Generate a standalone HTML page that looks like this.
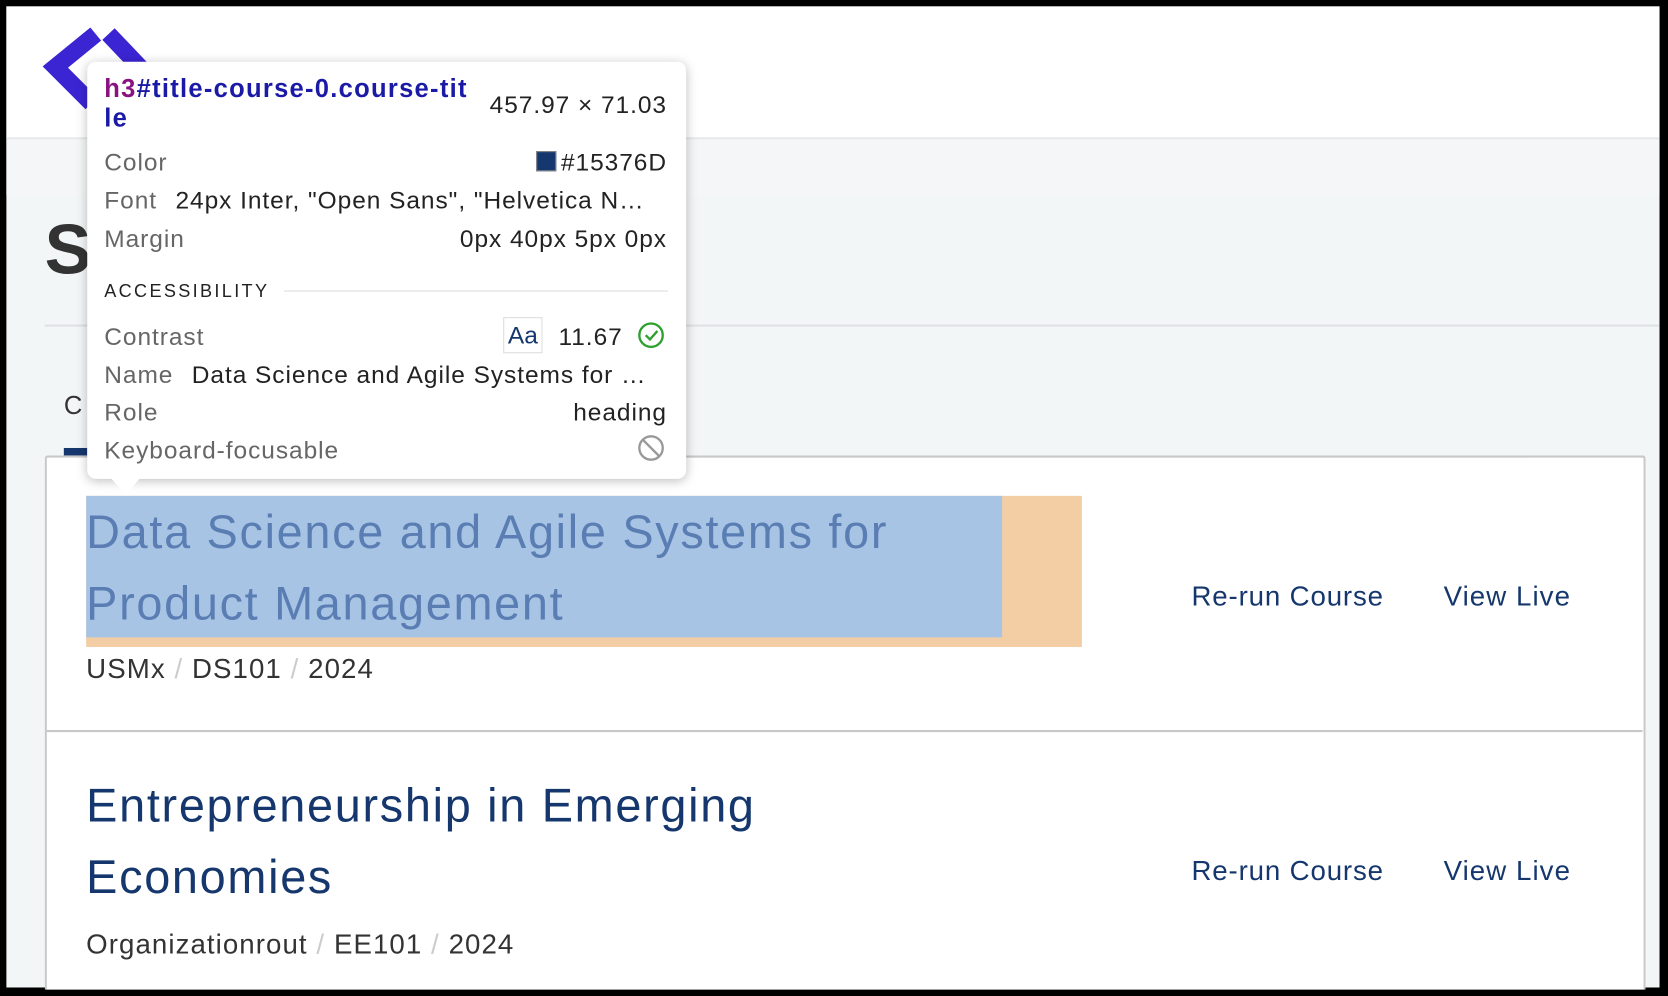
<!DOCTYPE html>
<html><head><meta charset="utf-8"><style>
html,body{margin:0;padding:0;width:1668px;height:996px;overflow:hidden;background:#000;}
#w{position:absolute;left:0;top:0;width:1568px;height:936px;transform:scale(1.0638,1.0641);transform-origin:0 0;font-family:"Liberation Sans",sans-serif;}
.a{position:absolute;white-space:nowrap;}
.p{letter-spacing:0.9px;}
</style></head><body><div id="w">
<div class="a" style="left:6px;top:6px;width:1554px;height:922px;background:#f3f6f7;overflow:hidden;">
</div>
<div class="a" style="left:6px;top:6px;width:1554px;height:123px;background:#fff;border-bottom:2px solid #e6e8ea;"></div>
<div class="a" style="left:6px;top:131px;width:1554px;height:52px;background:#f5f6f7;"></div>
<svg class="a" style="left:0;top:0" width="200" height="130"><polyline points="90,32 52,63 86,97" fill="none" stroke="#3b25d3" stroke-width="16"/><polyline points="102,32 140,72" fill="none" stroke="#3b25d3" stroke-width="16"/></svg>
<div class="a" style="left:42px;top:196px;font-size:66px;font-weight:bold;color:#333;">S</div>
<div class="a" style="left:42px;top:305px;width:1518px;height:2px;background:#dfe2e4;"></div>
<div class="a" style="left:60px;top:368px;font-size:24px;color:#333;">C</div>
<div class="a" style="left:60px;top:421px;width:22px;height:7px;background:#15376d;"></div>
<div class="a" style="left:42px;top:428px;width:1501px;height:500px;background:#fff;border:2px solid #c8c8c8;border-bottom:none;border-radius:3px 3px 0 0;"></div>
<div class="a" style="left:43px;top:686px;width:1501px;height:2px;background:#c8c8c8;"></div>
<div class="a" style="left:81px;top:466px;width:936px;height:142px;background:#f3cda4;"></div>
<div class="a" style="left:81px;top:466px;width:861px;height:133px;background:#a8c4e5;"></div>
<div class="a" style="left:81px;top:467px;font-size:44px;letter-spacing:1.6px;line-height:67px;color:#5a7db3;">Data Science and Agile Systems for<br>Product Management</div>
<div class="a" style="left:81px;top:613px;font-size:26px;letter-spacing:1px;color:#333;">USMx <span style="color:#ccc">/</span> DS101 <span style="color:#ccc">/</span> 2024</div>
<div class="a" style="left:1120px;top:545px;font-size:26px;letter-spacing:0.8px;color:#15376d;">Re-run Course</div>
<div class="a" style="left:1357px;top:545px;font-size:26px;letter-spacing:1px;color:#15376d;">View Live</div>
<div class="a" style="left:81px;top:724px;font-size:44px;letter-spacing:1.6px;line-height:67px;color:#15376d;">Entrepreneurship in Emerging<br>Economies</div>
<div class="a" style="left:81px;top:872px;font-size:26px;letter-spacing:1px;color:#333;">Organizationrout <span style="color:#ccc">/</span> EE101 <span style="color:#ccc">/</span> 2024</div>
<div class="a" style="left:1120px;top:803px;font-size:26px;letter-spacing:0.8px;color:#15376d;">Re-run Course</div>
<div class="a" style="left:1357px;top:803px;font-size:26px;letter-spacing:1px;color:#15376d;">View Live</div>
<div class="a" style="left:82px;top:58px;width:563px;height:392px;background:#fff;border-radius:8px;box-shadow:0 2px 10px rgba(0,0,0,.25);"></div>
<div class="a" style="left:104px;top:449px;width:0;height:0;border-left:14px solid transparent;border-right:14px solid transparent;border-top:16px solid #fff;"></div>
<div class="a" style="left:98px;top:70px;font-size:24px;letter-spacing:1.2px;line-height:28px;font-weight:bold;color:#1a1aa6;"><span style="color:#881280">h3</span>#title-course-0.course-tit<br>le</div>
<div class="a p" style="right:941px;top:85px;font-size:23px;color:#222;">457.97 × 71.03</div>
<div class="a p" style="left:98px;top:139px;font-size:23px;color:#666;">Color</div>
<div class="a p" style="right:941px;top:139px;font-size:23px;color:#222;"><span style="display:inline-block;width:17px;height:17px;background:#15376d;border:1px solid #888;vertical-align:-1px;margin-right:4px"></span>#15376D</div>
<div class="a p" style="left:98px;top:175px;font-size:23px;color:#666;">Font <span style="color:#222;margin-left:10px">24px Inter, "Open Sans", "Helvetica N…</span></div>
<div class="a p" style="left:98px;top:211px;font-size:23px;color:#666;">Margin</div>
<div class="a p" style="right:941px;top:211px;font-size:23px;color:#222;">0px 40px 5px 0px</div>
<div class="a" style="left:98px;top:264px;font-size:17px;letter-spacing:2.2px;color:#222;">ACCESSIBILITY</div>
<div class="a" style="left:267px;top:273px;width:361px;height:1px;background:#ddd;"></div>
<div class="a p" style="left:98px;top:303px;font-size:23px;color:#666;">Contrast</div>
<div class="a" style="left:473px;top:298px;width:35px;height:32px;border:1px solid #ddd;font-size:23px;color:#15376d;text-align:center;line-height:32px;">Aa</div>
<div class="a p" style="left:525px;top:303px;font-size:23px;color:#222;">11.67</div>
<svg class="a" style="left:599px;top:302px" width="28" height="28"><circle cx="13" cy="13" r="11" fill="none" stroke="#2da02d" stroke-width="2.2"/><polyline points="8,13 12,17 19,9" fill="none" stroke="#2da02d" stroke-width="2.2"/></svg>
<div class="a p" style="left:98px;top:339px;font-size:23px;color:#666;">Name <span style="color:#222;margin-left:10px">Data Science and Agile Systems for …</span></div>
<div class="a p" style="left:98px;top:374px;font-size:23px;color:#666;">Role</div>
<div class="a p" style="right:941px;top:374px;font-size:23px;color:#222;">heading</div>
<div class="a p" style="left:98px;top:410px;font-size:23px;color:#666;">Keyboard-focusable</div>
<svg class="a" style="left:599px;top:408px" width="28" height="28"><circle cx="13" cy="13" r="11" fill="none" stroke="#999" stroke-width="2.2"/><line x1="5" y1="5" x2="21" y2="21" stroke="#999" stroke-width="2.2"/></svg>
</div></body></html>
